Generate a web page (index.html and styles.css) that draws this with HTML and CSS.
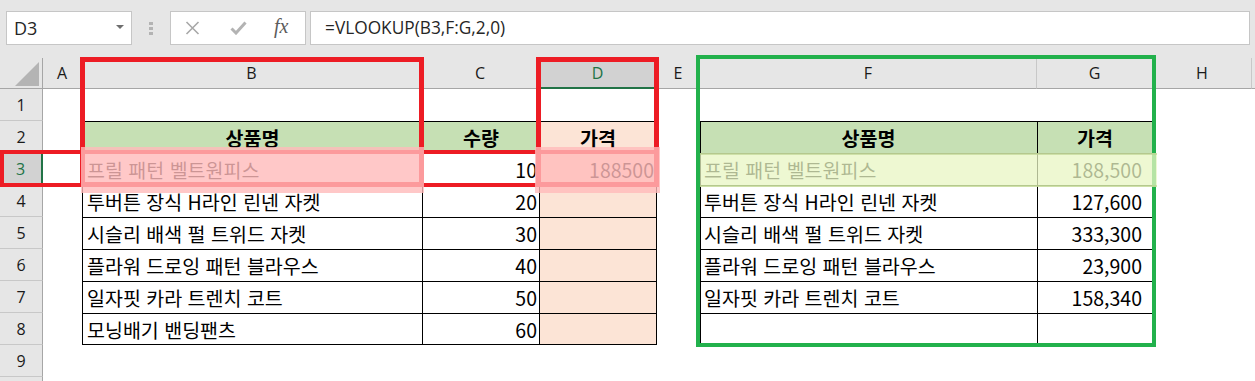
FILE: index.html
```html
<!DOCTYPE html>
<html lang="ko">
<head>
    <meta charset="UTF-8">
    <title>VLOOKUP</title>
    <link rel="stylesheet" href="styles.css">
</head>
<body>
    <!-- 수식 입력줄 -->
    <div class="topbar">
        <div class="namebox"><span>D3</span><span class="caret"></span></div>
        <div class="grip"><i></i><i></i><i></i></div>
        <div class="fxbtns">
            <svg class="ico-x" width="15" height="14" viewBox="0 0 15 14"><path d="M1.5 1 L13.5 13 M13.5 1 L1.5 13" stroke="#a8a8a8" stroke-width="1.6" fill="none"/></svg>
            <svg class="ico-ok" width="17" height="14" viewBox="0 0 17 14"><path d="M1.5 7.5 L6 12 L15.5 1.5" stroke="#b3b3b3" stroke-width="3" fill="none"/></svg>
            <span class="fx">fx</span>
        </div>
        <div class="formula">=VLOOKUP(B3,F:G,2,0)</div>
    </div>

    <!-- 시트 -->
    <div class="sheet">
        <div class="ch corner"><svg width="43" height="30"><polygon points="39,4 39,28 15,28" fill="#b4b4b4"/></svg></div>
        <div class="ch">A</div>
        <div class="ch">B</div>
        <div class="ch">C</div>
        <div class="ch sel">D</div>
        <div class="ch">E</div>
        <div class="ch">F</div>
        <div class="ch">G</div>
        <div class="ch">H</div>
        <div class="ch last"></div>

        <!-- 1 -->
        <div class="rh">1</div>
        <div></div><div></div><div></div><div></div><div></div><div></div><div></div><div></div><div></div>

        <!-- 2 -->
        <div class="rh">2</div>
        <div></div>
        <div class="t hd">상품명</div>
        <div class="t hd">수량</div>
        <div class="t hd peach tr">가격</div>
        <div></div>
        <div class="t hd fcol">상품명</div>
        <div class="t hd tr">가격</div>
        <div></div><div></div>

        <!-- 3 -->
        <div class="rh sel">3</div>
        <div></div>
        <div class="t">프릴 패턴 벨트원피스</div>
        <div class="t num">10</div>
        <div class="t num peach tr">188500</div>
        <div></div>
        <div class="t fcol">프릴 패턴 벨트원피스</div>
        <div class="t num gnum tr">188,500</div>
        <div></div><div></div>

        <!-- 4 -->
        <div class="rh">4</div>
        <div></div>
        <div class="t">투버튼 장식 H라인 린넨 자켓</div>
        <div class="t num">20</div>
        <div class="t peach tr"></div>
        <div></div>
        <div class="t fcol">투버튼 장식 H라인 린넨 자켓</div>
        <div class="t num gnum tr">127,600</div>
        <div></div><div></div>

        <!-- 5 -->
        <div class="rh">5</div>
        <div></div>
        <div class="t">시슬리 배색 펄 트위드 자켓</div>
        <div class="t num">30</div>
        <div class="t peach tr"></div>
        <div></div>
        <div class="t fcol">시슬리 배색 펄 트위드 자켓</div>
        <div class="t num gnum tr">333,300</div>
        <div></div><div></div>

        <!-- 6 -->
        <div class="rh">6</div>
        <div></div>
        <div class="t">플라워 드로잉 패턴 블라우스</div>
        <div class="t num">40</div>
        <div class="t peach tr"></div>
        <div></div>
        <div class="t fcol">플라워 드로잉 패턴 블라우스</div>
        <div class="t num gnum tr">23,900</div>
        <div></div><div></div>

        <!-- 7 -->
        <div class="rh">7</div>
        <div></div>
        <div class="t">일자핏 카라 트렌치 코트</div>
        <div class="t num">50</div>
        <div class="t peach tr"></div>
        <div></div>
        <div class="t fcol">일자핏 카라 트렌치 코트</div>
        <div class="t num gnum tr">158,340</div>
        <div></div><div></div>

        <!-- 8 -->
        <div class="rh">8</div>
        <div></div>
        <div class="t tb">모닝배기 밴딩팬츠</div>
        <div class="t num tb">60</div>
        <div class="t peach tr tb"></div>
        <div></div>
        <div class="t fcol tb"></div>
        <div class="t tr tb"></div>
        <div></div><div></div>

        <!-- 9, 10 -->
        <div class="rh">9</div>
        <div></div><div></div><div></div><div></div><div></div><div></div><div></div><div></div><div></div>
        <div class="rh"></div>
        <div></div><div></div><div></div><div></div><div></div><div></div><div></div><div></div><div></div>

        <!-- 표시 상자 -->
        <div class="mark red col-b"></div>
        <div class="mark red col-d"></div>
        <div class="mark red row-3"></div>
        <div class="hl pink hl-b"></div>
        <div class="hl pink hl-d"></div>
        <div class="mark green box-fg"></div>
        <div class="hl lime hl-fg"></div>
    </div>
</body>
</html>
```

FILE: styles.css
```css
body, html {
    margin: 0;
    padding: 0;
    width: 100%;
    height: 100%;
    overflow: hidden;
    background-color: #fff;
    font-family: "Open Sans", "Noto Sans CJK KR", sans-serif;
}
.topbar {
    height: 58px;
    box-sizing: border-box;
    padding: 11px 5px 0 6px;
    background-color: #e6e6e6;
    display: flex;
    align-items: flex-start;
}
.namebox {
    width: 126px;
    height: 34px;
    box-sizing: border-box;
    border: 1px solid #c6c6c6;
    background-color: #fff;
    padding: 0 7px 0 7px;
    display: flex;
    align-items: center;
    justify-content: space-between;
    font-size: 18px;
    color: #262626;
}
.caret {
    width: 0;
    height: 0;
    border-left: 4px solid transparent;
    border-right: 4px solid transparent;
    border-top: 4px solid #6e6e6e;
    margin-bottom: 2px;
}
.grip {
    width: 38px;
    height: 34px;
    display: flex;
    flex-direction: column;
    align-items: center;
    justify-content: center;
    gap: 2px;
}
.grip i {
    width: 4px;
    height: 3px;
    background-color: #b3b3b3;
}
.fxbtns {
    width: 136px;
    height: 34px;
    box-sizing: border-box;
    border: 1px solid #c6c6c6;
    background-color: #fff;
    display: flex;
    align-items: center;
    padding-left: 14px;
}
.ico-ok {
    margin-left: 30px;
}
.fx {
    margin-left: 27px;
    font-family: "Liberation Serif", serif;
    font-style: italic;
    font-size: 20px;
    color: #5c5c5c;
    margin-top: -3px;
}
.formula {
    flex: 1;
    margin-left: 4px;
    height: 34px;
    box-sizing: border-box;
    border: 1px solid #c6c6c6;
    background-color: #fff;
    padding-left: 14px;
    font-size: 17.3px;
    line-height: 32px;
    color: #262626;
}

/* 시트 격자 */
.sheet {
    position: relative;
    display: grid;
    grid-template-columns: 43px 39px 340px 117px 118px 43px 337px 116px 99px 1fr;
    grid-template-rows: 31px;
    grid-auto-rows: 32px;
    font-family: "Noto Sans CJK KR", sans-serif;
    font-size: 19.5px;
    color: #000;
}
.sheet > div {
    box-sizing: border-box;
    white-space: nowrap;
    overflow: hidden;
}
.ch {
    background-color: #e6e6e6;
    border-right: 1px solid #c8c8c8;
    border-bottom: 1px solid #a6a6a6;
    text-align: center;
    font-family: "Open Sans", sans-serif;
    font-size: 16px;
    line-height: 30px;
    color: #1a1a1a;
}
.ch.corner {
    border-right-color: #a6a6a6;
}
.ch.corner svg {
    display: block;
}
.ch.last {
    border-right: none;
}
.ch.sel {
    background-color: #d2d2d2;
    color: #217346;
    border-bottom: 2px solid #217346;
}
.rh {
    background-color: #e6e6e6;
    border-right: 1px solid #a6a6a6;
    border-bottom: 1px solid #c8c8c8;
    text-align: center;
    font-family: "Open Sans", sans-serif;
    font-size: 16px;
    line-height: 31px;
    padding-top: 1px;
    color: #1a1a1a;
}
.rh.sel {
    background-color: #d2d2d2;
    color: #217346;
    border-right: 2px solid #217346;
}

/* 표 셀 */
.t {
    border-left: 1px solid #000;
    border-top: 1px solid #000;
    padding: 0 4px;
    line-height: 31px;
}
.t.fcol {
    padding-left: 3px;
}
.t.tr {
    border-right: 1px solid #000;
}
.t.tb {
    border-bottom: 1px solid #000;
}
.t.hd {
    background-color: #c6e0b4;
    font-weight: bold;
    text-align: center;
}
.t.peach {
    background-color: #fce4d6;
}
.t.num {
    text-align: right;
    padding-right: 2px;
}
.t.gnum {
    padding-right: 10px;
}

/* 표시 상자 */
.mark {
    position: absolute;
    box-sizing: border-box;
}
.mark.red {
    border: 5px solid #ed1c24;
}
.mark.green {
    border: 4px solid #22b14c;
}
.col-b {
    left: 80px;
    top: -1px;
    width: 344px;
    height: 130px;
}
.col-d {
    left: 536px;
    top: -1px;
    width: 123px;
    height: 130px;
}
.mark.row-3 {
    left: 0;
    top: 92px;
    width: 659px;
    height: 37px;
    border-width: 4px;
}
.box-fg {
    left: 696px;
    top: -3px;
    width: 460px;
    height: 292px;
}
.hl {
    position: absolute;
    box-sizing: border-box;
}
.hl.pink {
    background-color: rgba(255, 186, 186, 0.8);
    top: 89px;
    height: 46px;
}
.hl-b {
    left: 81px;
    width: 343px;
}
.hl-d {
    left: 535px;
    width: 125px;
}
.hl.lime {
    left: 700px;
    top: 95px;
    width: 457px;
    height: 34px;
    background-color: rgba(232, 245, 195, 0.75);
    border-top: 2px solid rgba(185, 210, 140, 0.6);
    border-bottom: 2px solid rgba(185, 210, 140, 0.6);
}
```
